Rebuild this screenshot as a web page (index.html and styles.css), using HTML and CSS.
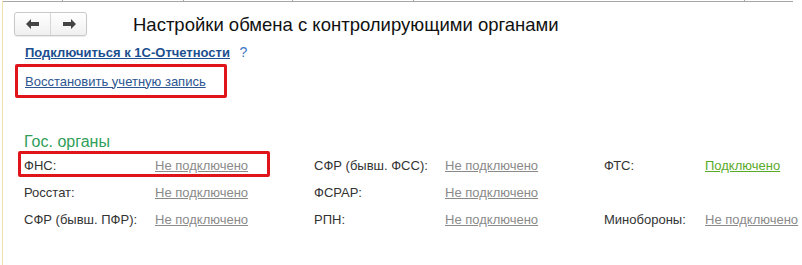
FILE: index.html
```html
<!DOCTYPE html>
<html lang="ru">
<head>
  <meta charset="UTF-8">
  <title>Настройки обмена с контролирующими органами</title>
  <link rel="stylesheet" href="styles.css">
</head>
<body>
  <div class="window">
    <div class="tabs-line">
      <span class="tick" style="left: 59px"></span>
      <span class="tick" style="left: 180px"></span>
      <span class="tick" style="left: 289px"></span>
      <span class="tick" style="left: 410px"></span>
      <span class="tick" style="left: 741px"></span>
    </div>

    <div class="form">
      <div class="header">
        <div class="nav">
          <button class="nav-btn" title="Назад">
            <svg width="14" height="10" viewBox="0 0 14 10"><path d="M0 5 L5 0 L5 3 L13 3 L13 7 L5 7 L5 10 Z" fill="#444"/></svg>
          </button>
          <button class="nav-btn" title="Вперед">
            <svg width="14" height="10" viewBox="0 0 14 10"><path d="M14 5 L9 0 L9 3 L1 3 L1 7 L9 7 L9 10 Z" fill="#444"/></svg>
          </button>
        </div>
        <h1 class="title">Настройки обмена с контролирующими органами</h1>
      </div>

      <div class="connect">
        <a href="#" class="connect-link">Подключиться к 1С-Отчетности</a>
        <span class="help">?</span>
      </div>

      <!-- выделено красной рамкой -->
      <div class="highlight restore">
        <a href="#" class="link">Восстановить учетную запись</a>
      </div>

      <div class="group-title">Гос. органы</div>

      <div class="agencies">
        <div class="highlight mark"></div>

        <span class="label">ФНС:</span>
        <a href="#" class="status">Не подключено</a>
        <span class="label">СФР (бывш. ФСС):</span>
        <a href="#" class="status">Не подключено</a>
        <span class="label">ФТС:</span>
        <a href="#" class="status on">Подключено</a>

        <span class="label">Росстат:</span>
        <a href="#" class="status">Не подключено</a>
        <span class="label">ФСРАР:</span>
        <a href="#" class="status">Не подключено</a>
        <span class="label"></span>
        <span></span>

        <span class="label">СФР (бывш. ПФР):</span>
        <a href="#" class="status">Не подключено</a>
        <span class="label">РПН:</span>
        <a href="#" class="status">Не подключено</a>
        <span class="label">Минобороны:</span>
        <a href="#" class="status">Не подключено</a>
      </div>
    </div>
  </div>
</body>
</html>
```

FILE: styles.css
```css
html, body {
  margin: 0;
  height: 100%;
  background: #fff;
  overflow: hidden;
}

body {
  font-family: "Liberation Sans", Arial, sans-serif;
  font-size: 13px;
  color: #333;
}

.window {
  position: relative;
  height: 100%;
  margin-left: 2px;
  border-left: 1px solid #f1e3a8;
}

.tabs-line {
  position: relative;
  height: 1px;
  margin-top: 1px;
  width: 790px;
  background: #a6a6a6;
}

.tick {
  position: absolute;
  top: -2px;
  width: 1px;
  height: 3px;
  background: #a6a6a6;
}

.form {
  padding-left: 11px;
}

.header {
  display: flex;
  align-items: center;
  padding-top: 8px;
}

.nav {
  display: flex;
  width: 73px;
  height: 24px;
  box-sizing: border-box;
  border: 1px solid #c8c8c8;
  border-radius: 3px;
  background: linear-gradient(#ffffff, #f0f0f0);
  box-shadow: 0 1px 1px rgba(0, 0, 0, 0.08);
}

.nav-btn {
  flex: 1;
  display: flex;
  align-items: center;
  justify-content: center;
  padding: 0;
  border: none;
  background: none;
}

.nav-btn + .nav-btn {
  border-left: 1px solid #d6d6d6;
}

.title {
  margin: 0 0 0 46px;
  padding-top: 3px;
  font-size: 18.5px;
  font-weight: normal;
  color: #111;
  line-height: 24px;
}

.connect {
  margin-top: 7px;
  padding-left: 11px;
  line-height: 16px;
}

.connect-link {
  font-weight: bold;
  color: #1c4f8f;
  text-decoration: underline;
}

.help {
  margin-left: 6px;
  color: #3b78c2;
  font-size: 14px;
}

.highlight {
  border: 3px solid #e0151b;
  border-radius: 2px;
}

.restore {
  width: 199px;
  height: 28px;
  margin-top: 3px;
  margin-left: 1px;
  padding-left: 7px;
  display: flex;
  align-items: center;
  box-sizing: content-box;
}

.link {
  color: #2c5592;
  text-decoration: underline;
}

.group-title {
  margin-top: 35px;
  padding-left: 10px;
  font-size: 16px;
  color: #2f9e58;
  line-height: 18px;
}

.agencies {
  position: relative;
  display: grid;
  grid-template-columns: 131px 159px 131px 159px 101px auto;
  grid-auto-rows: 27px;
  align-items: center;
  margin-top: 1px;
  padding-left: 10px;
}

.label {
  color: #333;
}

.status {
  color: #8a8a8a;
  text-decoration: underline;
}

.status.on {
  color: #5aaa2a;
}

.mark {
  position: absolute;
  left: 4px;
  top: -1px;
  width: 246px;
  height: 20px;
}
```
